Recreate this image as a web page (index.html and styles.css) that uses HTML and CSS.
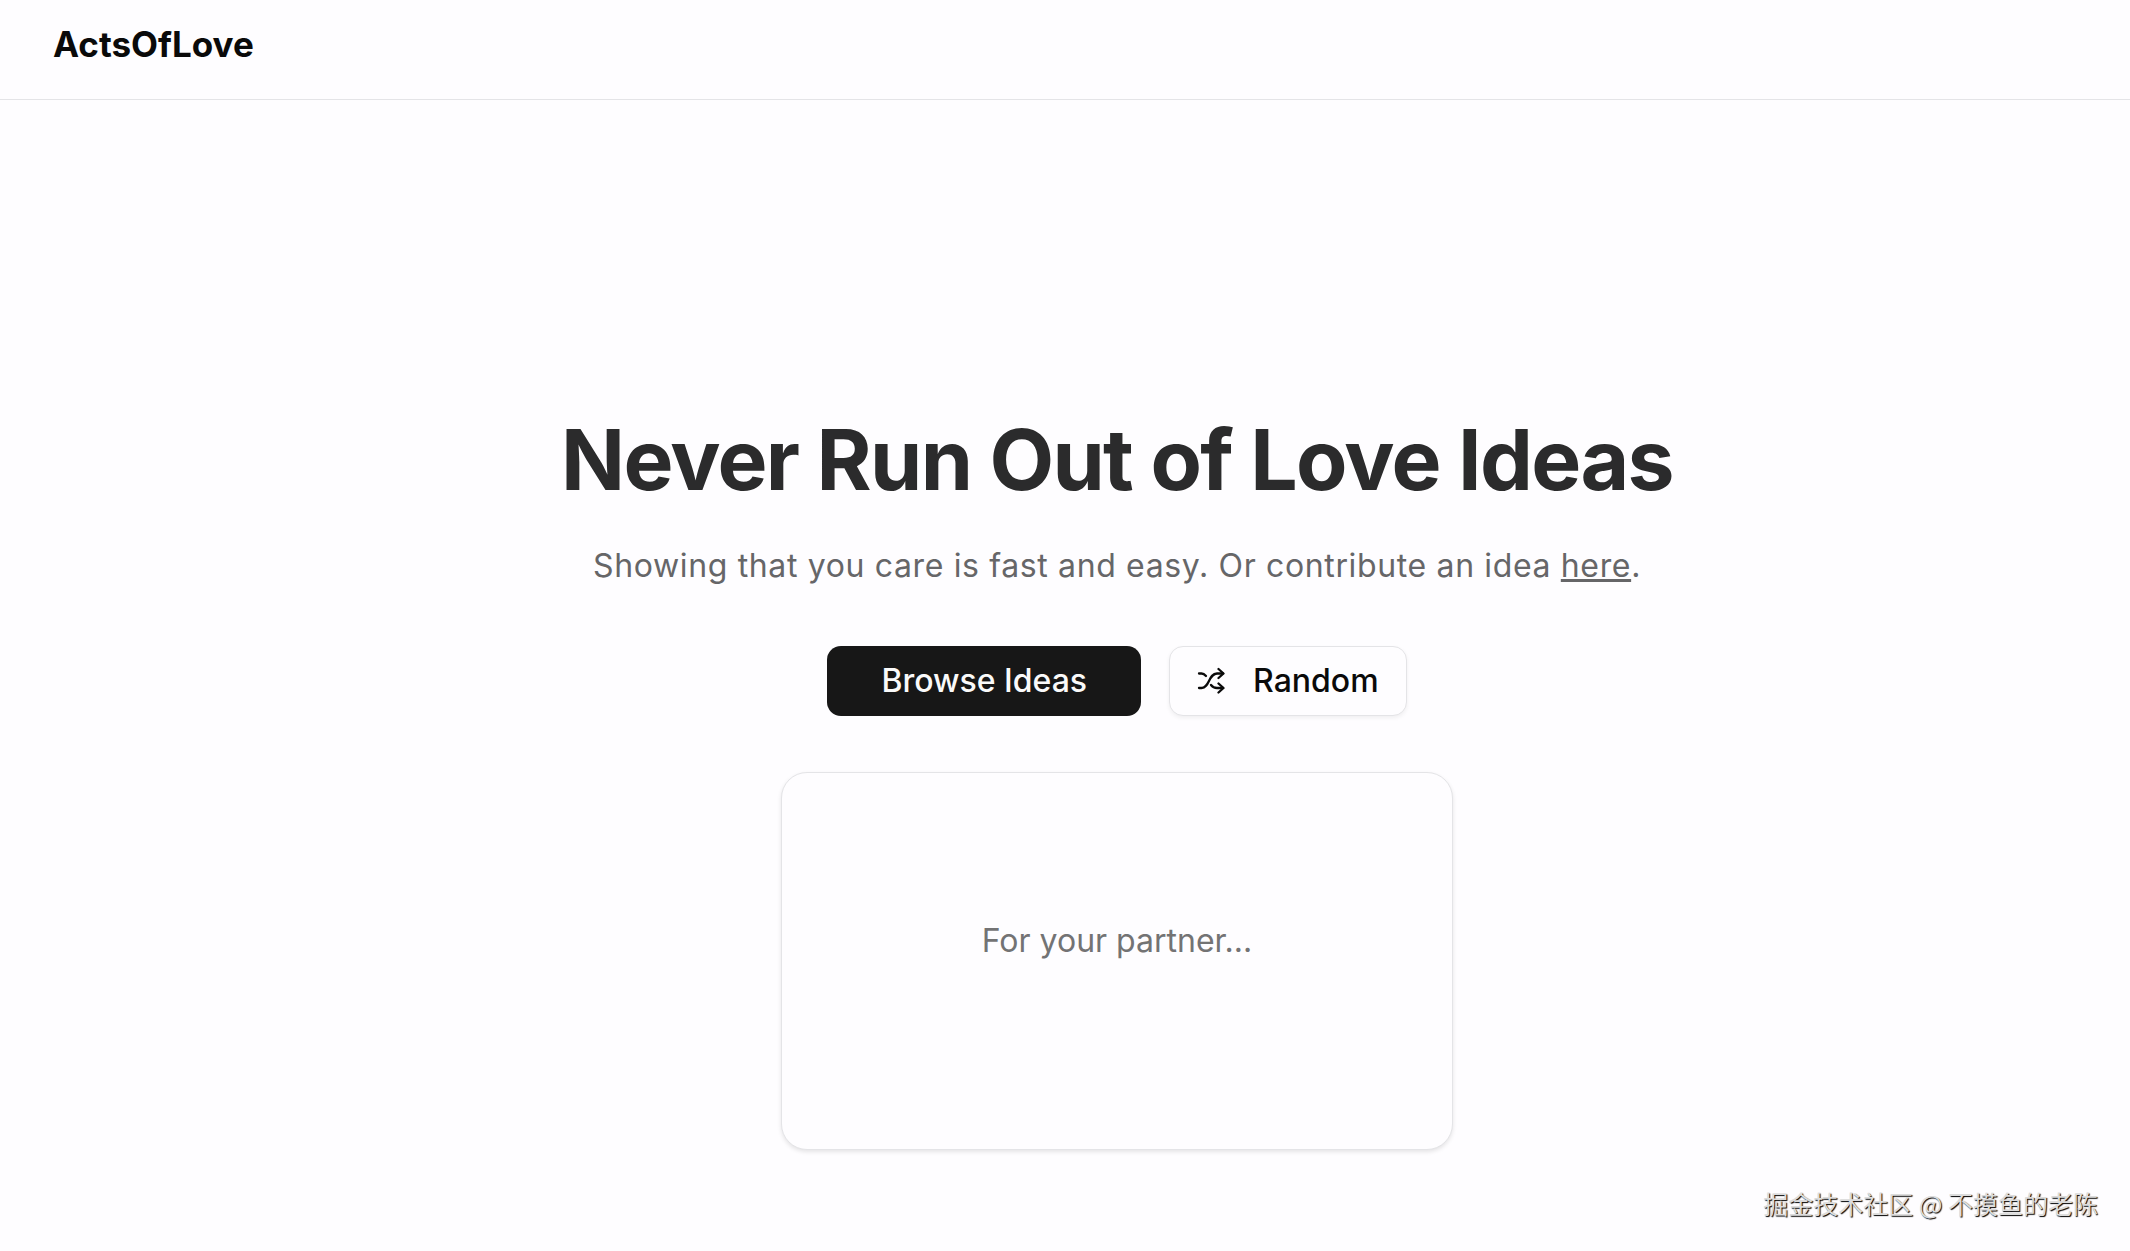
FILE: index.html
```html
<!DOCTYPE html>
<html lang="en">
<head>
<meta charset="utf-8">
<title>ActsOfLove</title>
<link rel="stylesheet" href="styles.css">
</head>
<body>
<header class="site-header"><a class="logo" href="#">ActsOfLove</a></header>
<main class="hero">
  <h1 class="title">Never Run Out of Love Ideas</h1>
  <p class="subtitle">Showing that you care is fast and easy. Or contribute an idea <a class="link" href="#">here</a>.</p>
  <div class="actions">
    <button class="btn btn-primary" type="button">Browse Ideas</button>
    <button class="btn btn-outline" type="button">
      <svg class="icon" viewBox="0 0 28 28" fill="none" stroke="currentColor" stroke-width="2.3" stroke-linecap="round" stroke-linejoin="round" aria-hidden="true">
        <path d="M2 6.500h2.500c1.800 0 3.200 1 4.500 2.500"/>
        <path d="M2 21h2.500C12.500 21 11.500 6.500 20 6.500h6"/>
        <path d="M14 18c1.500 2 3.200 3 6 3h6"/>
        <path d="M21.500 2l5 4.500-5 4.500M21.500 16.500l5 4.500-5 4.500"/>
      </svg>
      Random
    </button>
  </div>
  <section class="card"><p class="card-text">For your partner...</p></section>
</main>
<footer class="credit">掘金技术社区 @ 不摸鱼的老陈</footer>
</body>
</html>
```

FILE: styles.css
```css
* { box-sizing: border-box; }
body {
  margin: 0;
  min-height: 100vh;
  display: flex;
  flex-direction: column;
  background: #fefdff;
  color: #0a0a0a;
  font-family: Inter, "Noto Sans CJK SC", sans-serif;
}
.site-header {
  padding: 23px 53px 34px;
  border-bottom: 1px solid #e4e4e7;
}
.logo {
  display: block;
  color: inherit;
  text-decoration: none;
  font-size: 35px;
  line-height: 42px;
  font-weight: 700;
}
.hero {
  flex: 1;
  display: flex;
  flex-direction: column;
  align-items: center;
  padding: 306px 0 0 104px;
}
.title {
  margin: 0;
  font-size: 84px;
  line-height: 108px;
  font-weight: 700;
  letter-spacing: -0.02em;
  color: #2b2b2c;
}
.subtitle {
  margin: 28px 0 56px;
  font-size: 32px;
  line-height: 48px;
  letter-spacing: 0.02em;
  color: #666668;
}
.link { color: inherit; }
.actions { display: flex; gap: 28px; }
.btn {
  display: flex;
  align-items: center;
  gap: 28px;
  height: 70px;
  border: 1px solid transparent;
  border-radius: 14px;
  font: 500 32px/48px Inter, sans-serif;
}
.btn-primary { padding: 0 53px; background: #171717; color: #fafafa; }
.btn-outline {
  padding: 0 27px;
  background: #fefdff;
  border-color: #e4e4e7;
  color: #0a0a0a;
  box-shadow: 0 2px 4px rgba(0, 0, 0, 0.06);
}
.icon { width: 28px; height: 28px; }
.card {
  display: flex;
  justify-content: center;
  width: 672px;
  min-height: 378px;
  margin-top: 56px;
  padding-top: 144px;
  border: 1px solid #e4e4e7;
  border-radius: 26px;
  background: #fefdff;
  box-shadow: 0 2px 4px rgba(0, 0, 0, 0.1);
}
.card-text {
  margin: 0;
  font-size: 32px;
  line-height: 48px;
  color: #737374;
}
.credit {
  align-self: flex-end;
  padding: 0 32px 30px 0;
  font: 25px/36px "Noto Sans CJK SC", sans-serif;
  color: #dcdcdc;
  text-shadow: 1px 1px 1px #000;
}
```
